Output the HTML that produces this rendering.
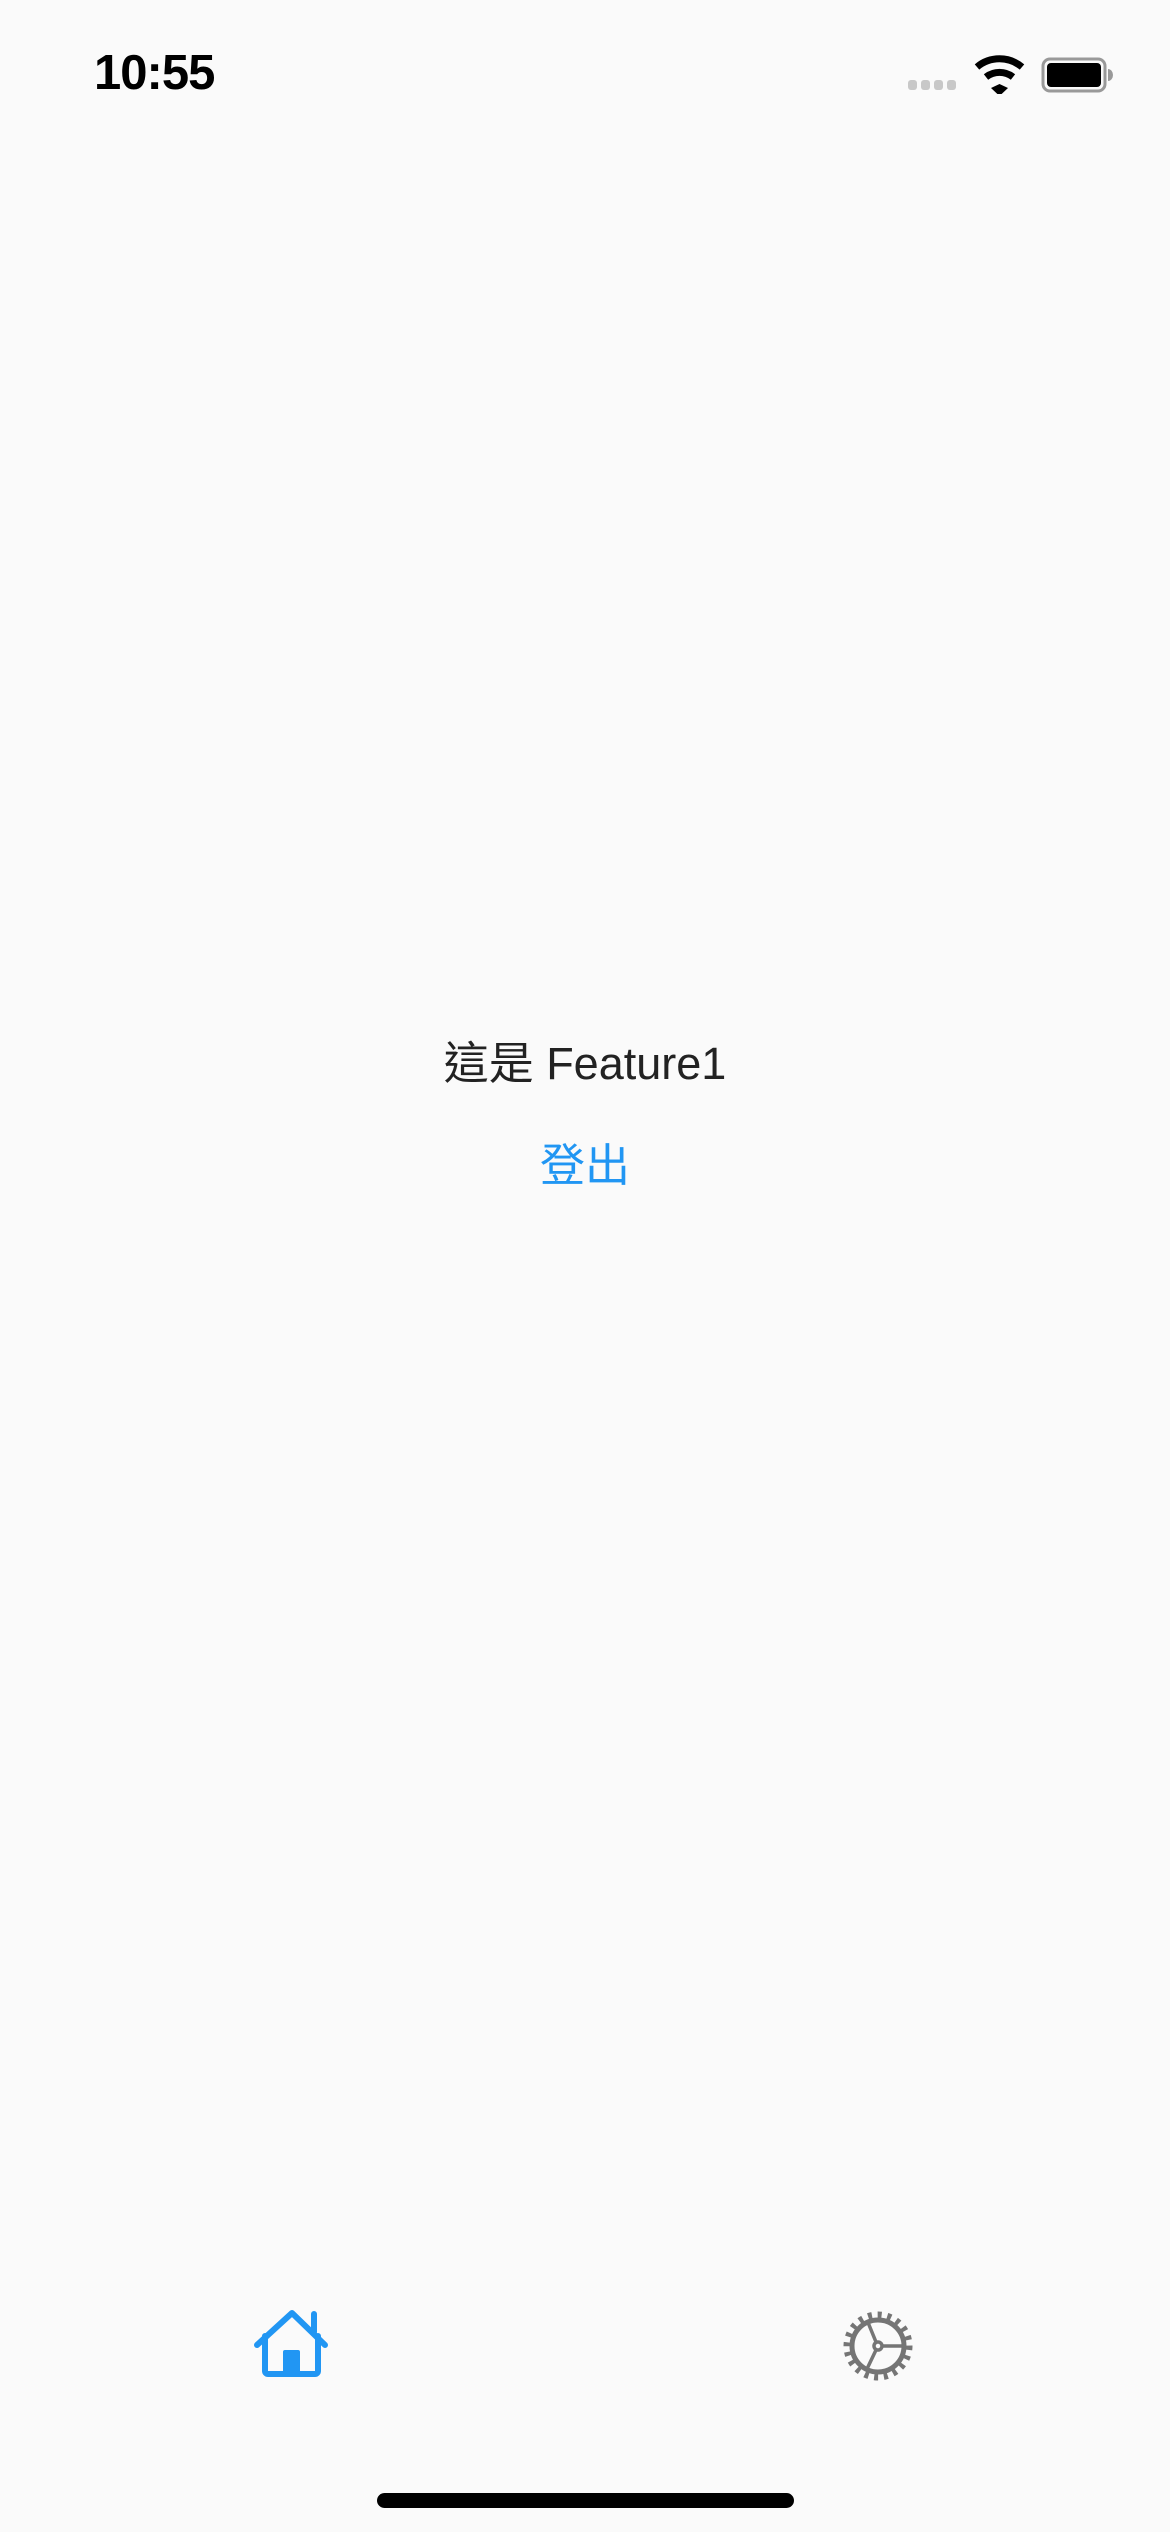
<!DOCTYPE html>
<html><head><meta charset="utf-8"><style>
html,body{margin:0;padding:0;}
body{width:1170px;height:2532px;background:#fafafa;position:relative;overflow:hidden;font-family:"Liberation Sans","Noto Sans CJK TC",sans-serif;}
.time{position:absolute;left:94px;top:45px;font-size:49px;font-weight:bold;color:#000;letter-spacing:-1px;}
.t1{position:absolute;left:0;width:1170px;top:1027px;text-align:center;font-size:45px;color:#222;}
.t2{position:absolute;left:0;width:1170px;top:1129px;text-align:center;font-size:45px;color:#2196f3;}
.bar{position:absolute;left:377px;top:2493px;width:417px;height:15px;border-radius:8px;background:#000;}
</style></head><body>
<div class="time">10:55</div>
<svg style="position:absolute;left:905px;top:52px" width="215" height="42" viewBox="0 0 215 42">
<g fill="#c8c8c8"><rect x="3" y="28" width="9" height="10" rx="3"/><rect x="16" y="28" width="9" height="10" rx="3"/><rect x="29" y="28" width="9" height="10" rx="3"/><rect x="42" y="28" width="9" height="10" rx="3"/></g>
<g fill="none" stroke="#000" stroke-width="7"><path d="M72 15 A35 35 0 0 1 117 15"/><path d="M81 25 A22 22 0 0 1 108 25"/></g>
<path d="M94.5 32 L86 36 L94.5 44 L103 36 Z" fill="#000"/>
<rect x="138" y="7" width="62" height="32" rx="7" fill="none" stroke="#999" stroke-width="3"/>
<rect x="142" y="11" width="54" height="24" rx="4" fill="#000"/>
<path d="M203 17 a5 6 0 0 1 0 12z" fill="#999"/>
</svg>
<div class="t1">這是 Feature1</div>
<div class="t2">登出</div>
<svg style="position:absolute;left:252px;top:2310px" width="80" height="70" viewBox="0 0 80 70">
<g fill="none" stroke="#2196f3" stroke-width="6" stroke-linecap="round" stroke-linejoin="round">
<path d="M5 35 L40 3 L73 35"/>
<path d="M62 4 V22"/>
<path d="M13 26 V61 a3 3 0 0 0 3 3 H63 a3 3 0 0 0 3 -3 V26"/>
</g>
<rect x="31" y="40" width="17" height="24" rx="2" fill="#2196f3"/>
</svg>
<svg style="position:absolute;left:842px;top:2310px" width="72" height="72" viewBox="0 0 72 72">
<g stroke="#757575" fill="none">
<circle cx="36" cy="36" r="26" stroke-width="5"/>
<circle cx="36" cy="36" r="31" stroke-width="7" stroke-dasharray="4 5.7"/>
<circle cx="36" cy="36" r="4" stroke-width="3.5"/>
<path d="M40 36 H62 M34 32 L25 10 M34 40 L24 61" stroke-width="3.5"/>
</g>
</svg>
<div class="bar"></div>
</body></html>
